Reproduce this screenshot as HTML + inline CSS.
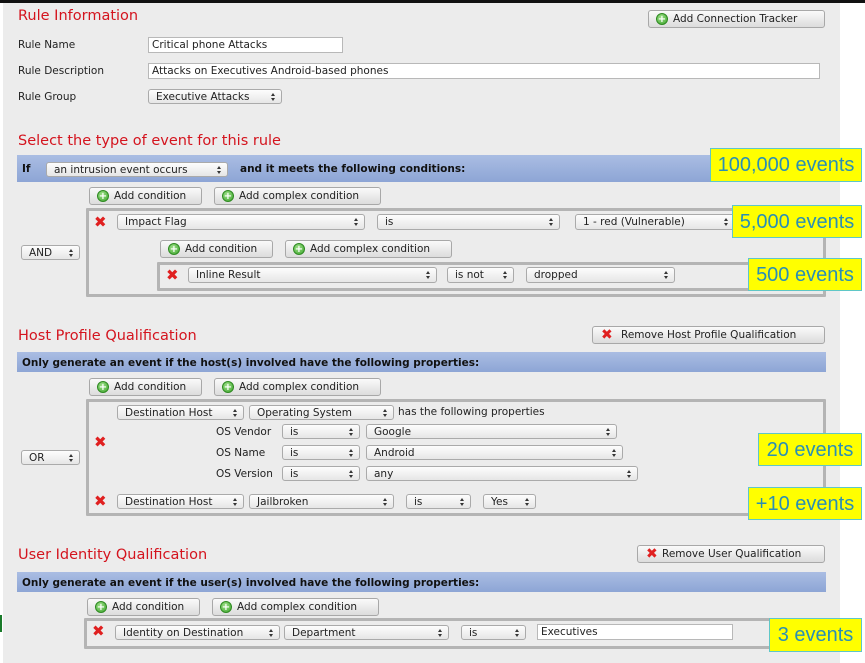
<!DOCTYPE html>
<html><head><meta charset="utf-8"><style>
*{margin:0;padding:0;box-sizing:border-box}
body{width:865px;height:663px;background:#fff;position:relative;overflow:hidden;font-family:"DejaVu Sans","Liberation Sans",sans-serif;font-size:10.5px;color:#222}
.panel{position:absolute;left:3px;top:2px;width:837px;height:661px;background:#ececec}
.topbar{position:absolute;left:0;top:0;width:865px;height:3px;background:#111}
.a{position:absolute;white-space:nowrap}
.h{color:#d4141e;font-size:14.5px;font-family:"DejaVu Sans",sans-serif}
.lbl{font-size:10.5px;color:#222}
.in{position:absolute;background:#fff;border:1px solid #b8b8b8;padding-left:3px;font-size:10.5px;line-height:15px}
.sel{position:absolute;background:linear-gradient(#fdfdfd,#e6e6e6);border:1px solid #aaa;border-radius:3px;padding-left:7px;font-size:10.5px;line-height:14px;white-space:nowrap;overflow:hidden}
.sel:after{content:"";position:absolute;right:6px;top:3px;width:0;height:0;border-left:2.5px solid transparent;border-right:2.5px solid transparent;border-bottom:3px solid #333}
.sel:before{content:"";position:absolute;right:6px;top:8px;width:0;height:0;border-left:2.5px solid transparent;border-right:2.5px solid transparent;border-top:3px solid #333}
.btn{position:absolute;background:linear-gradient(#fafafa,#dcdcdc);border:1px solid #a8a8a8;border-radius:3px;font-size:10.5px;line-height:17px;white-space:nowrap;padding-left:24px;color:#222}
.btn i{position:absolute;left:7px;top:2px;width:12px;height:12px;border-radius:50%;background:radial-gradient(circle at 40% 35%,#9fe08a,#3ba52b);border:1px solid #2f8a22}
.btn i:after{content:"+";position:absolute;left:0;top:-3px;width:10px;text-align:center;color:#fff;font-weight:bold;font-size:10px}
.x{position:absolute;color:#e02020;font-weight:bold;font-size:15px;line-height:14px}
.btn .xx{position:absolute;left:8px;top:0;color:#e02020;font-weight:bold;font-size:14px;font-style:normal}
.bar{position:absolute;left:17px;width:809px;background:linear-gradient(#aabde3,#8da5d5);font-weight:bold;font-size:10.5px;color:#111}
.box{position:absolute;border:3px solid #b4b4b4;border-radius:1px}
.y{position:absolute;background:#ffff00;border:1.5px solid #5fc7c7;color:#2a8fb5;font-family:"Liberation Sans",sans-serif;font-size:20px;text-align:center;white-space:nowrap}
</style></head><body>
<div class="panel"></div>
<div class="topbar"></div>
<div class="a" style="left:0;top:615px;width:2px;height:17px;background:#1a7a2a"></div>

<div class="a h" style="left:18px;top:8px">Rule Information</div>
<div class="btn" style="left:648px;top:10px;width:177px;height:18px"><i></i>Add Connection Tracker</div>
<div class="a lbl" style="left:18px;top:39px">Rule Name</div>
<div class="in" style="left:148px;top:37px;width:195px;height:16px">Critical phone Attacks</div>
<div class="a lbl" style="left:18px;top:65px">Rule Description</div>
<div class="in" style="left:148px;top:63px;width:672px;height:16px">Attacks on Executives Android-based phones</div>
<div class="a lbl" style="left:18px;top:91px">Rule Group</div>
<div class="sel" style="left:148px;top:89px;width:134px;height:15px">Executive Attacks</div>

<div class="a h" style="left:18px;top:133px">Select the type of event for this rule</div>
<div class="bar" style="top:155px;height:27px"><span class="a" style="left:5px;top:8px">If</span><span class="a" style="left:223px;top:8px">and it meets the following conditions:</span></div>
<div class="sel" style="left:46px;top:162px;width:182px;height:15px">an intrusion event occurs</div>
<div class="y" style="left:710px;top:148px;width:152px;height:34px;line-height:32px">100,000 events</div>

<div class="btn" style="left:89px;top:187px;width:113px;height:18px"><i></i>Add condition</div>
<div class="btn" style="left:214px;top:187px;width:167px;height:18px"><i></i>Add complex condition</div>
<div class="box" style="left:86px;top:208px;width:740px;height:89px"></div>
<div class="sel" style="left:21px;top:245px;width:59px;height:15px">AND</div>
<div class="x" style="left:94px;top:215px">✖</div>
<div class="sel" style="left:117px;top:214px;width:248px;height:16px">Impact Flag</div>
<div class="sel" style="left:377px;top:214px;width:183px;height:16px">is</div>
<div class="sel" style="left:575px;top:214px;width:160px;height:16px">1 - red (Vulnerable)</div>
<div class="y" style="left:732px;top:205px;width:130px;height:33px;line-height:32px">5,000 events</div>
<div class="btn" style="left:160px;top:240px;width:113px;height:18px"><i></i>Add condition</div>
<div class="btn" style="left:285px;top:240px;width:167px;height:18px"><i></i>Add complex condition</div>
<div class="box" style="left:157px;top:262px;width:600px;height:29px"></div>
<div class="x" style="left:166px;top:268px">✖</div>
<div class="sel" style="left:188px;top:267px;width:249px;height:16px">Inline Result</div>
<div class="sel" style="left:447px;top:267px;width:67px;height:16px">is not</div>
<div class="sel" style="left:526px;top:267px;width:149px;height:16px">dropped</div>
<div class="y" style="left:748px;top:258px;width:114px;height:33px;line-height:32px">500 events</div>

<div class="a h" style="left:18px;top:328px">Host Profile Qualification</div>
<div class="btn" style="left:592px;top:326px;width:233px;height:18px;padding-left:28px"><b class="xx">✖</b>Remove Host Profile Qualification</div>
<div class="bar" style="top:352px;height:20px"><span class="a" style="left:5px;top:5px">Only generate an event if the host(s) involved have the following properties:</span></div>
<div class="btn" style="left:89px;top:378px;width:113px;height:18px"><i></i>Add condition</div>
<div class="btn" style="left:214px;top:378px;width:167px;height:18px"><i></i>Add complex condition</div>
<div class="box" style="left:86px;top:399px;width:740px;height:117px"></div>
<div class="sel" style="left:21px;top:450px;width:59px;height:15px">OR</div>
<div class="sel" style="left:117px;top:405px;width:127px;height:15px">Destination Host</div>
<div class="sel" style="left:249px;top:405px;width:145px;height:15px">Operating System</div>
<div class="a lbl" style="left:398px;top:406px">has the following properties</div>
<div class="x" style="left:94px;top:435px">✖</div>
<div class="a lbl" style="left:216px;top:426px">OS Vendor</div>
<div class="sel" style="left:282px;top:424px;width:78px;height:15px">is</div>
<div class="sel" style="left:366px;top:424px;width:251px;height:15px">Google</div>
<div class="a lbl" style="left:216px;top:447px">OS Name</div>
<div class="sel" style="left:282px;top:445px;width:78px;height:15px">is</div>
<div class="sel" style="left:366px;top:445px;width:257px;height:15px">Android</div>
<div class="a lbl" style="left:216px;top:468px">OS Version</div>
<div class="sel" style="left:282px;top:466px;width:78px;height:15px">is</div>
<div class="sel" style="left:366px;top:466px;width:272px;height:15px">any</div>
<div class="x" style="left:94px;top:494px">✖</div>
<div class="sel" style="left:117px;top:494px;width:127px;height:15px">Destination Host</div>
<div class="sel" style="left:249px;top:494px;width:145px;height:15px">Jailbroken</div>
<div class="sel" style="left:406px;top:494px;width:65px;height:15px">is</div>
<div class="sel" style="left:483px;top:494px;width:53px;height:15px">Yes</div>
<div class="y" style="left:758px;top:433px;width:104px;height:33px;line-height:32px">20 events</div>
<div class="y" style="left:748px;top:487px;width:114px;height:33px;line-height:32px">+10 events</div>

<div class="a h" style="left:18px;top:547px">User Identity Qualification</div>
<div class="btn" style="left:637px;top:545px;width:188px;height:18px"><b class="xx">✖</b>Remove User Qualification</div>
<div class="bar" style="top:572px;height:20px"><span class="a" style="left:5px;top:5px">Only generate an event if the user(s) involved have the following properties:</span></div>
<div class="btn" style="left:87px;top:598px;width:113px;height:18px"><i></i>Add condition</div>
<div class="btn" style="left:212px;top:598px;width:167px;height:18px"><i></i>Add complex condition</div>
<div class="box" style="left:84px;top:618px;width:742px;height:31px"></div>
<div class="x" style="left:92px;top:624px">✖</div>
<div class="sel" style="left:115px;top:625px;width:165px;height:15px">Identity on Destination</div>
<div class="sel" style="left:284px;top:625px;width:165px;height:15px">Department</div>
<div class="sel" style="left:461px;top:625px;width:65px;height:15px">is</div>
<div class="in" style="left:537px;top:624px;width:196px;height:16px">Executives</div>
<div class="y" style="left:769px;top:618px;width:93px;height:34px;line-height:32px">3 events</div>
</body></html>
